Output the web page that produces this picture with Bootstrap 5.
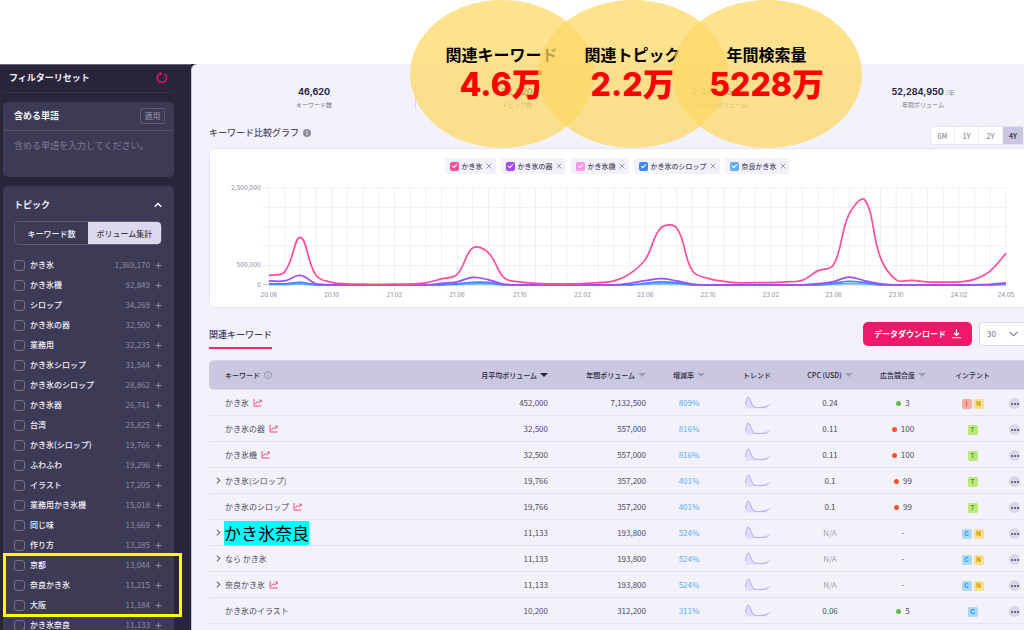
<!DOCTYPE html>
<html lang="ja">
<head>
<meta charset="utf-8">
<meta name="viewport" content="width=device-width, initial-scale=1">
<title>関連キーワード</title>
<link href="https://cdn.jsdelivr.net/npm/bootstrap@5.3.0/dist/css/bootstrap.min.css" rel="stylesheet">
<style>
  body { font-family: "Noto Sans CJK JP", sans-serif; font-size: 8px; line-height: 12px; color: #4d4965; background: #fff; }
  button { font: inherit; color: inherit; border: 0; background: none; padding: 0; }
  svg { display: block; }
  .topband { height: 64px; }
  .fs-main { font-size: 9px; line-height: 14px; }

  /* highlight ellipses lying over the dashboard */
  .bubbles { position: absolute; top: 0; left: 40%; z-index: 5; }
  .bubble { width: 190px; height: 148px; border-radius: 50%; background: rgba(254, 216, 103, .74); padding-top: 42px; text-align: center; position: relative; }
  .bubble:first-child { width: 184px; }
  .bubble + .bubble { margin-left: -56px; }
  .bubble h2 { font-size: 16px; line-height: 24px; font-weight: 700; color: #000; margin: 0; white-space: nowrap; }
  .bubble p { font-family: Inter, "Noto Sans CJK JP", sans-serif; font-size: 32px; line-height: 38px; font-weight: 800; color: #f00; margin: 0; white-space: nowrap; }

  /* sidebar */
  .side { width: 191px; background: #29263b; padding: 0 17px 0 3px; color: #f3f2fb; border-top: 1px solid #6b6877; }
  .reset { height: 28px; padding: 0 6px 2px; border-bottom: 1px solid #353247; margin-bottom: 9px; }
  .panel { background: #3d3a56; border-radius: 5px; }
  .panel-words { margin-bottom: 9px; }
  .panel-words header { height: 29px; padding: 0 9px 0 11px; border-bottom: 1px solid #54516c; }
  .panel-words textarea { display: block; width: 100%; height: 46px; padding: 8px 11px; background: none; border: 0; resize: none; outline: 0; }
  .panel-words textarea::placeholder { color: #807d94; opacity: 1; }
  .apply { border: 1px solid #5c5974; border-radius: 2px; width: 25px; height: 16px; color: #9b98ae; }
  .panel-topic { padding: 12px 12px 0 11px; }
  .seg { height: 24px; border: 1px solid #5c5974; border-radius: 5px; overflow: hidden; margin: 9px 0 10px; }
  .seg button { flex: 1; font-weight: 500; padding-top: 1px; }
  .seg .on { background: #dddaee; color: #3d3a56; }
  .topic { height: 20px; }
  .topic label { font-weight: 500; flex: 1; white-space: nowrap; }
  .topic input { appearance: none; width: 11px; height: 11px; border: 1px solid #757289; border-radius: 3px; margin: 0 5px 0 0; }
  .topic output, .topic button { color: #8f8ca2; }
  .topic button { margin-left: 5px; width: 7px; }
  .mark-group { outline: 3px solid #ff0; outline-offset: -1px; margin: 0 -18px 0 -9px; padding: 0 18px 0 9px; }

  /* main column */
  .content { background: #f3f2fb; border-left: 1px solid #c9c6da; border-radius: 6px 0 0 0; padding-left: 17px; overflow: hidden; min-width: 0; }
  .stats { padding: 20px 0 0 3px; height: 62px; }
  .stat { flex: 1; height: 26px; text-align: center; border-left: 1px solid #dddbe9; }
  .stat:first-child { border-color: transparent; }
  .stat strong { display: block; font-family: Inter, sans-serif; font-size: 9px; line-height: 15px; color: #29263b; }
  .stat strong small { font: 6px "Noto Sans CJK JP", sans-serif; color: #8f8ca2; }
  .stat span { display: block; font-size: 6px; line-height: 12px; color: #77748a; }
  .range { border: 1px solid #e6e4f2; border-right: 0; border-radius: 4px 0 0 4px; background: #fff; height: 19px; overflow: hidden; font-size: 7px; font-weight: 500; color: #8f8ca2; }
  .range button { width: 24px; border-right: 1px solid #f0eff8; }
  .range .on { width: 21px; background: #cac7e0; color: #29263b; }
  .chart { background: #fff; border: 1px solid #e6e4f2; border-right: 0; border-radius: 5px 0 0 5px; margin-top: 3px; height: 160px; padding-top: 9px; }
  .legend { font-size: 7px; gap: 5px; font-weight: 500; }
  .chip { background: #f3f2fb; border-radius: 3px; height: 16px; padding: 0 4px 0 5px; gap: 3px; white-space: nowrap; }
  .chip label { gap: 3px; }
  .chip input { appearance: none; margin: 0; width: 9px; height: 9px; border-radius: 2px; position: relative; }
  .chip input:checked::after { content: ""; position: absolute; left: 3px; top: 1px; width: 3px; height: 5px; border: solid #fff; border-width: 0 1px 1px 0; transform: rotate(45deg); }
  .c1 { background: #ff4d9e; } .c2 { background: #a24bff; } .c3 { background: #ff93ee; } .c4 { background: #3f86ff; } .c5 { background: #62adff; }
  .chart text { font: 500 6px Inter, sans-serif; fill: #9a97ad; }

  .tools { margin-top: 14px; margin-bottom: 10px; height: 28px; }
  .tab { border-bottom: 2px solid #f02a6e; height: 27px; color: #3d3a56; font-weight: 500; padding-top: 6px; }
  .dl { background: #f01868; color: #fff; border-radius: 5px; width: 109px; height: 24px; font-weight: 700; gap: 6px; }
  .count { height: 24px; width: 45px; margin-left: 7px; border: 1px solid #dddaec; border-right: 0; border-radius: 4px 0 0 4px; background: #fff; position: relative; }
  .count select { appearance: none; border: 0; background: none; width: 100%; height: 100%; padding: 0 7px; font: inherit; color: #6b6880; outline: 0; }
  .count svg { position: absolute; right: 6px; top: 8px; pointer-events: none; }

  .kw { width: 100%; table-layout: fixed; border-collapse: separate; border-spacing: 0; white-space: nowrap; }
  .kw th { height: 30px; padding: 0; background: #cac7e0; border: solid #d8d5ea; border-width: 1px 0; font-size: 7px; font-weight: 500; color: #29263b; text-align: center; }
  .kw th:first-child { border-radius: 5px 0 0 5px; text-align: left; padding-left: 16px; }
  .kw th button { font-weight: 500; }
  .kw th .tri { display: inline-block; border: solid transparent; border-width: 4px 4px 0; border-top-color: #a09dae; margin-left: 3px; vertical-align: 1px; }
  .kw th .tri.on { border-top-color: #29263b; }
  .kw td { height: 26px; padding: 0; border-bottom: 1px solid #e4e2f0; text-align: center; }
  .kw td:first-child { text-align: left; }
  .kw .num { text-align: right; }
  .kw .yr { padding-right: 12px; }
  .kw .rate { color: #56aff0; }
  .kw .na { color: #a3a1b2; }
  .kw .exp { width: 16px; padding-left: 7px; flex: none; }
  .kw .big { background: #0ff; color: #000; font-size: 17px; line-height: 24px; margin-left: -1px; }
  .dot { display: inline-block; width: 5px; height: 5px; border-radius: 50%; margin-right: 4px; background: #ff4f2b; vertical-align: 0; }
  .dot.low { background: #5cbf45; }
  .tag { display: inline-block; width: 10px; height: 10px; border-radius: 2px; font: 700 6px/10px Inter, sans-serif; margin: 2px 1px 0; vertical-align: middle; }
  .tI { background: #ffaaa0; color: #e0503c; } .tN { background: #fbe08c; color: #c99a00; } .tT { background: #bbe878; color: #4aa03c; } .tC { background: #a9d9f9; color: #2f8fd8; }
  .more { width: 11px; height: 11px; border-radius: 50%; background: #d9d6ea; gap: 1px; margin: 2px auto 0; }
  .more i { width: 2px; height: 2px; border-radius: 50%; background: #4d4965; }
</style>
</head>
<body>
<div class="vh-100 overflow-hidden d-flex flex-column position-relative">
  <div class="topband flex-shrink-0"></div>

  <section class="bubbles d-flex">
    <div class="bubble"><h2>関連キーワード</h2><p>4.6万</p></div>
    <div class="bubble"><h2>関連トピック</h2><p>2.2万</p></div>
    <div class="bubble"><h2>年間検索量</h2><p>5228万</p></div>
  </section>

  <div class="d-flex flex-grow-1" style="background:#29263b;min-height:0">
    <aside class="side flex-shrink-0">
      <div class="reset fs-main fw-bold d-flex align-items-center justify-content-between">
        <span>フィルターリセット</span>
        <button aria-label="リセット"><svg width="12" height="13" viewBox="0 0 12 13" fill="none" stroke="#f01868" stroke-width="1.3"><path d="M8.6 2.9A4.7 4.7 0 1 1 4.2 2.4"/><path d="M3.8 .7L6.3 2.4 4.2 4.4z" fill="#f01868" stroke="none"/></svg></button>
      </div>
      <div class="panel panel-words">
        <header class="d-flex align-items-center justify-content-between">
          <label for="words" class="fs-main fw-bold">含める単語</label>
          <button class="apply">適用</button>
        </header>
        <textarea id="words" class="fs-main" placeholder="含める単語を入力してください。"></textarea>
      </div>
      <div class="panel panel-topic">
        <div class="fs-main fw-bold d-flex align-items-center justify-content-between">
          <span>トピック</span>
          <svg width="8" height="6" viewBox="0 0 8 6" fill="none" stroke="#fff" stroke-width="1.5"><path d="M.7 4.8L4 1.5l3.3 3.3"/></svg>
        </div>
        <div class="seg d-flex"><button>キーワード数</button><button class="on">ボリューム集計</button></div>
        <div id="topics"></div>
      </div>
    </aside>

    <main class="content flex-grow-1">
      <div class="stats d-flex">
        <div class="stat"><strong>46,620</strong><span>キーワード数</span></div>
        <div class="stat"><strong>22,020</strong><span>トピック数</span></div>
        <div class="stat"><strong>2,340,354 <small>/月</small></strong><span>月間平均ボリューム</span></div>
        <div class="stat"><strong>52,284,950 <small>/年</small></strong><span>年間ボリューム</span></div>
      </div>

      <div class="d-flex align-items-start justify-content-between">
        <div class="fs-main d-flex align-items-center fw-medium">キーワード比較グラフ
          <svg class="ms-1" width="8" height="8" viewBox="0 0 8 8"><circle cx="4" cy="4" r="4" fill="#8f8ca2"/><path d="M4 3.4v2.8M4 1.7v1" stroke="#f3f2fb"/></svg>
        </div>
        <div class="range d-flex"><button>6M</button><button>1Y</button><button>2Y</button><button class="on">4Y</button></div>
      </div>

      <section class="chart">
        <div class="legend d-flex justify-content-center" id="legend"></div>
        <svg id="plot" width="100%" viewBox="0 0 815 130" fill="none"></svg>
      </section>

      <div class="tools d-flex align-items-start">
        <a href="#kw" class="tab fs-main text-decoration-none me-auto">関連キーワード</a>
        <button class="dl d-flex align-items-center justify-content-center">データダウンロード
          <svg width="9" height="10" viewBox="0 0 9 10" fill="none" stroke="#fff" stroke-width="1.1"><path d="M4.5 0v6.3M2 4l2.5 2.5L7 4M0 8.8h9"/></svg>
        </button>
        <div class="count"><select aria-label="表示件数"><option>30</option><option>50</option></select>
          <svg width="9" height="6" viewBox="0 0 9 6" fill="none" stroke="#77748a" stroke-width="1.1"><path d="M.5 .8l4 4 4-4"/></svg>
        </div>
      </div>

      <table class="kw" id="kw">
        <colgroup><col><col style="width:108px"><col style="width:110px"><col style="width:62px"><col style="width:74px"><col style="width:72px"><col style="width:74px"><col style="width:65px"><col style="width:19px"></colgroup>
        <thead><tr>
          <th><span class="d-flex align-items-center">キーワード<svg class="ms-1" width="8" height="8" viewBox="0 0 8 8" fill="none" stroke="#8f8ca2" stroke-width=".8"><circle cx="4" cy="4" r="3.5"/><path d="M4 3.5v2.4M4 2v.8"/></svg></span></th>
          <th class="num"><button>月平均ボリューム<span class="tri on"></span></button></th>
          <th class="num yr"><button>年間ボリューム<span class="tri"></span></button></th>
          <th><button>増減率<span class="tri"></span></button></th>
          <th>トレンド</th>
          <th><button>CPC (USD)<span class="tri"></span></button></th>
          <th><button>広告競合度<span class="tri"></span></button></th>
          <th>インテント</th><th></th>
        </tr></thead>
        <tbody id="rows"></tbody>
      </table>
    </main>
  </div>
</div>

<script src="https://cdn.jsdelivr.net/npm/bootstrap@5.3.0/dist/js/bootstrap.bundle.min.js"></script>
<script>
const $ = id => document.getElementById(id);

// topic filter
const topics = [['かき氷','1,369,170'],['かき氷機','92,849'],['シロップ','34,269'],['かき氷の器','32,500'],['業務用','32,235'],['かき氷シロップ','31,544'],['かき氷のシロップ','28,862'],['かき氷器','26,741'],['台湾','25,825'],['かき氷(シロップ)','19,766'],['ふわふわ','19,296'],['イラスト','17,205'],['業務用かき氷機','15,018'],['同じ味','13,669'],['作り方','13,285'],['京都','13,044'],['奈良かき氷','11,215'],['大阪','11,184'],['かき氷奈良','11,133']];
const topicRow = ([name, n], i) => `<div class="topic d-flex align-items-center"><input type="checkbox" id="t${i}"><label for="t${i}">${name}</label><output>${n}</output><button aria-label="${name}を展開"><svg width="7" height="7" viewBox="0 0 7 7" stroke="currentColor" stroke-width=".9"><path d="M3.5 .5v6M.5 3.5h6"/></svg></button></div>`;
const all = topics.map(topicRow);
$('topics').innerHTML = all.slice(0, 15).join('') + '<div class="mark-group">' + all.slice(15, 18).join('') + '</div>' + all[18];

// legend
$('legend').innerHTML = ['かき氷','かき氷の器','かき氷機','かき氷のシロップ','奈良かき氷'].map((n, i) => `<div class="chip d-flex align-items-center"><label class="d-flex align-items-center"><input type="checkbox" class="c${i + 1}" checked>${n}</label><button aria-label="${n}を外す"><svg width="6" height="6" viewBox="0 0 6 6" stroke="#8f8ca2" stroke-width=".9"><path d="M.5 .5l5 5M5.5 .5l-5 5"/></svg></button></div>`).join('');

// chart: 48 months, heights above the base line
const X0 = 59, STEP = 738 / 47, BASE = 111, H = 97;
const zeros = peaks => Array.from({length: 48}, (_, i) => peaks[i] || 0);
const pink = [9.5,13,47.5,9.5,2.5,1,.7,.6,.7,.9,2,6,10.5,37,32,7,3,1.5,1,1,1.2,2.2,4,11,25.5,57,57,14,6.5,3.5,2,2.2,2.3,3,4.5,14,20,71,85,27,5,4.5,3,2.7,3,5.5,14,31.5];
const purple = zeros({0:4,1:4,2:9.5,3:1,11:1.5,12:3,13:7.5,14:5,15:.7,23:1.5,24:4.2,25:6.2,26:4,27:.8,35:1.2,36:3.3,37:7.7,38:4,39:1,46:.6,47:2});
const blue = zeros({0:1,1:1,2:2.5,12:1,13:2.6,14:2.4,24:1.5,25:3,26:2.3,36:1.5,37:3.6,38:2.2,47:1});
const sky = blue.map(v => v * .4);
// each control point lies along the line between the two neighbours, in proportion to the segment's length
const curve = data => {
  const p = data.map((v, i) => [X0 + i * STEP, BASE - v]);
  const dist = (a, b) => Math.hypot(a[0] - b[0], a[1] - b[1]);
  const ctl = p.map((c, i) => {
    const a = p[i - 1] || c, b = p[i + 1] || c, d1 = dist(a, c), d2 = dist(c, b);
    const fa = .4 * d1 / (d1 + d2), fb = .4 * d2 / (d1 + d2), dx = b[0] - a[0], dy = b[1] - a[1];
    return [c[0] - fa * dx, Math.min(BASE, c[1] - fa * dy), c[0] + fb * dx, Math.min(BASE, c[1] + fb * dy)];
  });
  return `M${p[0]}` + p.slice(1).map((c, i) => `C${ctl[i][2]} ${ctl[i][3]} ${ctl[i + 1][0]} ${ctl[i + 1][1]} ${c}`).join('');
};
let g = '';
for (let i = 0; i < 48; i++) g += `<path d="M${X0 + i * STEP} ${BASE - H}V${BASE + 5}" stroke="#f0eff4"/>`;
for (let i = 1; i < 6; i++) g += `<path d="M${X0 - 6} ${BASE - i * H / 5}H797" stroke="#f0eff4"/>`;
g += `<path d="M${X0 - 6} ${BASE}H797" stroke="#c9c6da"/>`;
[['0',0],['500,000',1],['2,500,000',5]].forEach(([t, i]) => g += `<text x="51" y="${BASE - i * H / 5 + 2}" text-anchor="end">${t}</text>`);
['20.06','20.10','21.02','21.06','21.10','22.02','22.06','22.10','23.02','23.06','23.10','24.02','24.05'].forEach((t, i) => g += `<text x="${X0 + Math.min(i * 4, 47) * STEP}" y="123" text-anchor="middle">${t}</text>`);
[[sky,'#62adff'],[blue,'#3f86ff'],[purple,'#a24bff'],[pink,'#ff4d9e']].forEach(([d, c]) => g += `<path d="${curve(d)}" stroke="${c}" stroke-width="1.7"/>`);
$('plot').innerHTML = g;

// keyword table: name, graph icon, expandable, monthly, yearly, rate, cpc, competition, intents
const rows = [
  ['かき氷',1,0,'452,000','7,132,500','809%','0.24','3','IN'],
  ['かき氷の器',1,0,'32,500','557,000','816%','0.11','100','T'],
  ['かき氷機',1,0,'32,500','557,000','816%','0.11','100','T'],
  ['かき氷(シロップ)',0,1,'19,766','357,200','401%','0.1','99','T'],
  ['かき氷のシロップ',1,0,'19,766','357,200','401%','0.1','99','T'],
  ['かき氷奈良',0,1,'11,133','193,800','524%','N/A','-','CN'],
  ['なら かき氷',0,1,'11,133','193,800','524%','N/A','-','CN'],
  ['奈良かき氷',1,1,'11,133','193,800','524%','N/A','-','CN'],
  ['かき氷のイラスト',0,0,'10,200','312,200','311%','0.06','5','C']];
const graph = '<svg class="ms-1" width="9" height="8" viewBox="0 0 9 8" fill="none" stroke="#f0457f" stroke-width="1"><path d="M1 0v7h7.500M2.300 5l2-2.300 1.500 1.300L8 1.300M6.300 1.100h2v1.700"/></svg>';
const chev = '<svg width="5" height="7" viewBox="0 0 5 7" fill="none" stroke="#6b6880" stroke-width="1.1"><path d="M.8 .6l3 2.900-3 2.900"/></svg>';
const spark = '<svg class="mx-auto" width="25" height="13" viewBox="0 0 25 13" fill="none"><path d="M.5 9C1.300 5 2 1 3.300 1S6 6.500 8 10C9.500 12 17 12 20 11.300S23 10 24.500 8.500L8 12.500H.5z" fill="#e2dcfc"/><path d="M.5 9C1.300 5 2 1 3.300 1S6 6.500 8 10C9.500 12 17 12 20 11.300S23 10 24.500 8.500" stroke="#b3a5f7"/></svg>';
$('rows').innerHTML = rows.map(r => `<tr>
  <td><div class="d-flex align-items-center"><span class="exp">${r[2] ? chev : ''}</span><span class="${r[0] === 'かき氷奈良' ? 'big' : ''}">${r[0]}</span>${r[1] ? graph : ''}</div></td>
  <td class="num">${r[3]}</td><td class="num yr">${r[4]}</td><td class="rate">${r[5]}</td><td>${spark}</td>
  <td class="${r[6] === 'N/A' ? 'na' : ''}">${r[6]}</td>
  <td>${r[7] === '-' ? '-' : `<span class="dot ${+r[7] < 30 ? 'low' : ''}"></span>${r[7]}`}</td>
  <td>${[...r[8]].map(t => `<span class="tag t${t}">${t}</span>`).join('')}</td>
  <td><button class="more d-flex align-items-center justify-content-center" aria-label="メニュー"><i></i><i></i><i></i></button></td></tr>`).join('');
</script>
</body>
</html>
